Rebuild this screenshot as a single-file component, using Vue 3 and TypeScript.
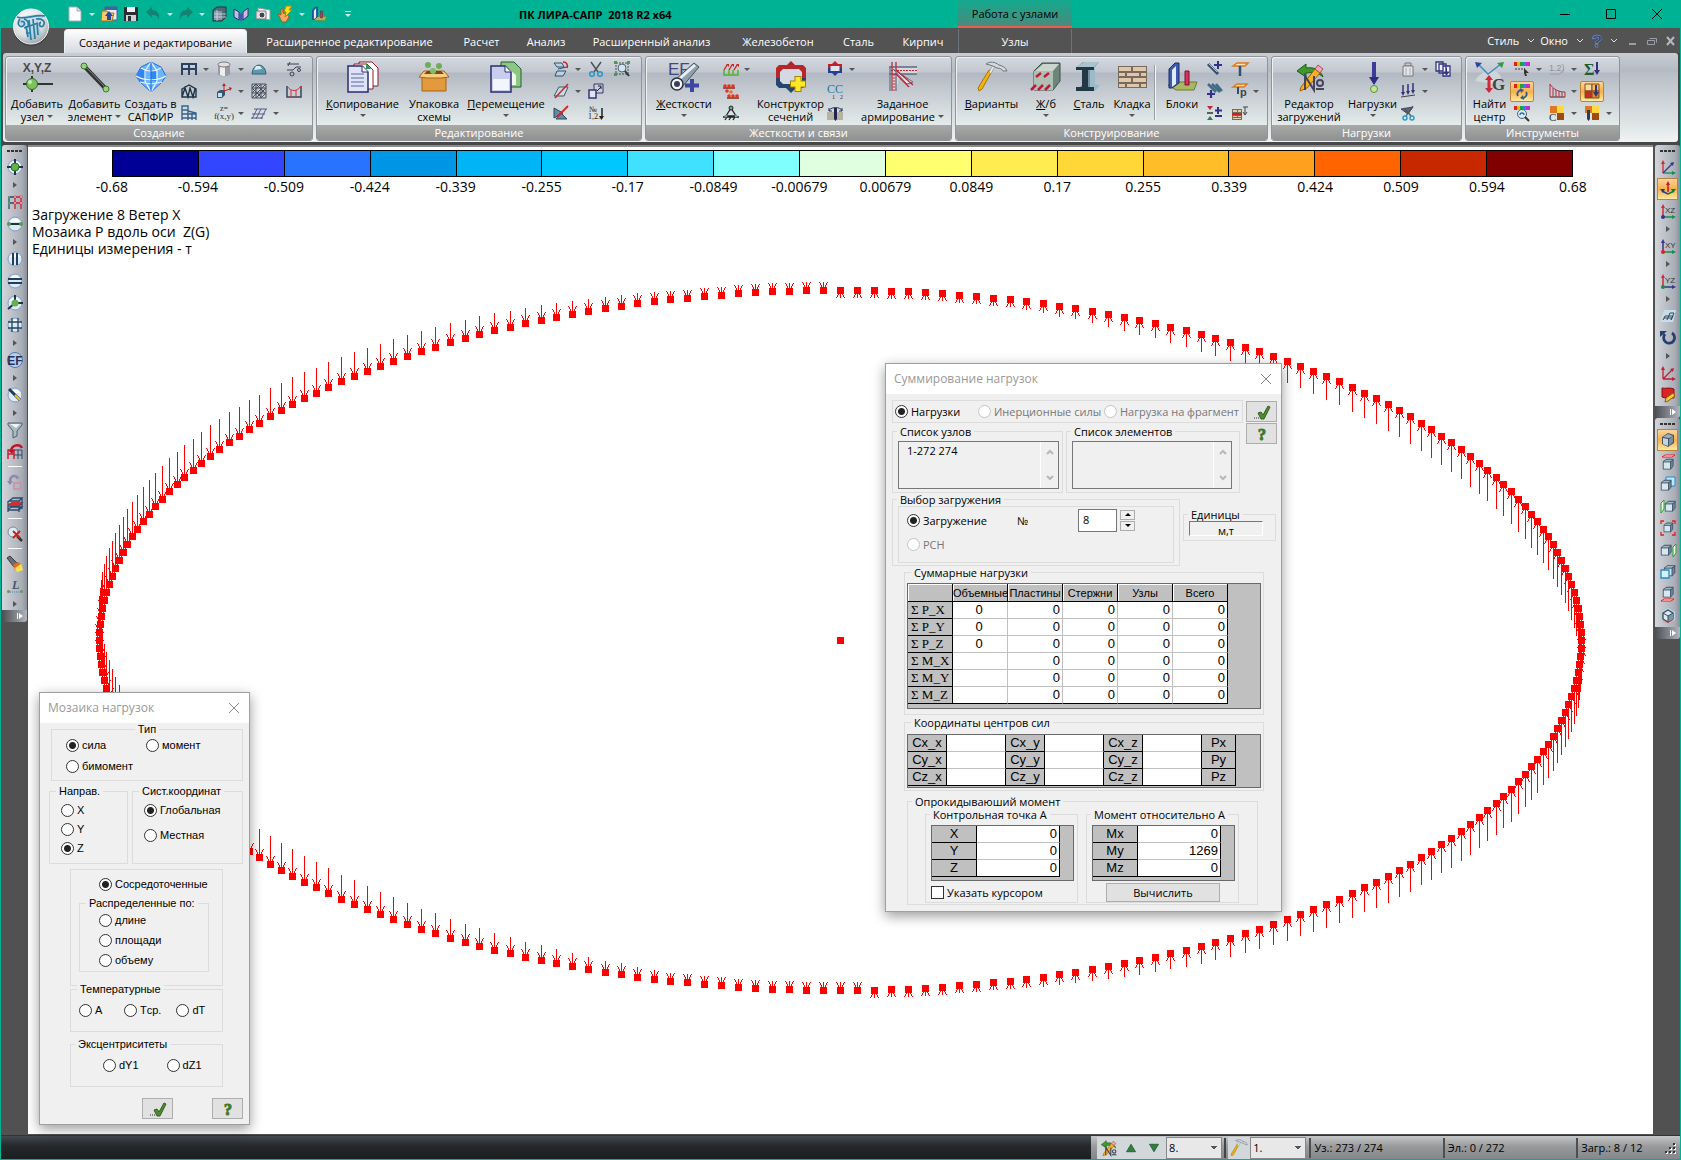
<script setup lang="ts">
import { h, ref } from 'vue'

/* ---------- icons: [view box side, markup] ---------- */
const cube = '<path d="M2 5l4-3h8v8l-3 4H2z" fill="#41566b"/><path d="M3 6h7v7H3z" fill="#d8e6ee"/><path d="M3 5l3-2h7l-3 2z" fill="#9fb2c0"/><path d="M11 6l2-2v6l-2 3z" fill="#6f8698"/>'
const ball = '<circle cx="8" cy="8" r="7" fill="#dcebf7" stroke="#7d9cc0"/><path d="M3 6a5.500 5.500 0 0 1 10 0" fill="#fff"/>'
const spectrum = '<path d="M0 1h3v4H0z" fill="#e02020"/><path d="M3 1h3v4H3z" fill="#f0c000"/><path d="M6 1h3v4H6z" fill="#20a040"/><path d="M9 1h3v4H9z" fill="#3080f0"/><path d="M12 1h4v4h-4z" fill="#c030c0"/>'
const hammer = '<path d="M16 10L6 28l-3 2-1-3L13 9z" fill="#f2b40c" stroke="#a87404"/><path d="M13 11l4-7 2 1-4 8z" fill="#e8e8e8" stroke="#888" stroke-width=".6"/><path d="M10 3c4-3 9-2 13 1 4 1 7 3 8 6l-4 0c-1-2-3-3-6-3-3-2-7-3-11-4z" fill="#d5dade" stroke="#6c757c"/>'
const editNo = '<path d="M4 10l9-7v4c8-1 14 1 17 9-4-4-9-5-17-4v4z" fill="#3f9a2e" stroke="#1e5c16"/><path d="M8 26L22 8l5 4L14 27l-7 3z" fill="#ffb01c" stroke="#9c6204"/><path d="M22 8l3-4 5 4-3 4z" fill="#f3a7b0" stroke="#a05060"/><path d="M12 29V15l9 14V15" fill="none" stroke="#45465c" stroke-width="2"/><circle cx="27" cy="22" r="3" fill="none" stroke="#45465c" stroke-width="2"/><path d="M23 28h8" stroke="#45465c" stroke-width="2"/>'
const axes = (v: string, hz: string, dot: string, t: string) =>
  `<path d="M3 13V4" stroke="${v}" stroke-width="1.500"/><path d="M1 5l2-4 2 4z" fill="${v}"/><path d="M3 14h9" stroke="${hz}" stroke-width="1.500"/><path d="M12 12l4 2-4 2z" fill="${hz}"/><circle cx="3" cy="14" r="2" fill="${dot}"/><text x="5" y="10" font-size="8" font-family="Liberation Sans, sans-serif" fill="#333">${t}</text>`
const quad = '<path d="M1 1h7v7H1z" fill="#e07820"/><path d="M8 1h7v7H8z" fill="#ffd840"/><path d="M8 8h7v7H8z" fill="#a04a10"/>'

const icons: Record<string, [number, string]> = {
  fileNew: [16, '<path d="M2 1h8l4 4v10H2z" fill="#fff" stroke="#aab"/><path d="M10 1v4h4" fill="#dde" stroke="#aab"/>'],
  open: [16, '<path d="M4 1h12v13H4z" fill="#e8ecf6" stroke="#506090"/><path d="M4 1h12v3H4z" fill="#4060b0"/><path d="M1 5h5l1 2h6l-2 8H0z" fill="#f6c96a" stroke="#a8741c"/><path d="M6 14v-4H4l4-5 4 5h-2v4z" fill="#2848a0"/>'],
  save: [16, '<path d="M1 1h14v14H1z" fill="#2a2d33"/><path d="M4 1h8v5H4z" fill="#f2f2f2"/><path d="M3 9h10v6H3z" fill="#cfd3d8"/><path d="M5 10h3v5H5z" fill="#2a2d33"/>'],
  undo: [16, '<path d="M1 6l6-5v3c5 0 8 3 7 10-1-4-3-5-7-5v3z" fill="#148374"/>'],
  redo: [16, '<path d="M15 6L9 1v3C4 4 1 7 2 14c1-4 3-5 7-5v3z" fill="#148374"/>'],
  cubeDark: [16, '<path d="M2 4l4-3h9v10l-4 4H2z" fill="#506878" stroke="#25343f"/><path d="M3 5h8v9H3z" fill="#7f98a8"/><path d="M3 8h12M3 11h12M6 4v11" stroke="#d0dde5" stroke-width=".8"/>'],
  book: [16, '<path d="M1 3l5 3v8l-5-3z" fill="#b8c4e8" stroke="#28306c"/><path d="M10 6l5-4v8l-5 4z" fill="#d8b8d8" stroke="#28306c"/><path d="M6 6l2 2 2-2v8l-2 1-2-1z" fill="#4058b0"/>'],
  camera: [16, '<path d="M3 2l12 2v10L3 12z" fill="#fff" stroke="#999"/><path d="M1 5h10v8H1z" fill="#d8dce0" stroke="#777"/><circle cx="7" cy="9" r="3" fill="#445" stroke="#eee"/>'],
  bolt: [16, '<path d="M1 8l3 1V3h2v4l4 1 2 3-3 5H5z" fill="#f5a860" stroke="#a85c18"/><path d="M9 0h6l-3 4h3l-7 7 1-5H7z" fill="#ffe020" stroke="#c08000"/>'],
  blocks: [32, '<path d="M2 24l8 5h18l3-8H14z" fill="#a8b860" stroke="#6c7a30"/><path d="M3 8l6-6h4v20l-7 5H3z" fill="#3c5cae" stroke="#1c2c70"/><path d="M6 9l4-4v18l-4 3z" fill="#e4ecfa"/><path d="M19 10h4v14h-4z" fill="#d8305a" stroke="#801030"/>'],
  xyz: [32, '<text x="16" y="11" text-anchor="middle" font-size="12" font-weight="bold" font-family="Liberation Sans, sans-serif" fill="#4a4a4a">X,Y,Z</text><path d="M2 23h30" stroke="#333" stroke-width="2"/><path d="M11 15v16" stroke="#333" stroke-width="2"/><circle cx="11" cy="23" r="5.500" fill="#7cc25c" stroke="#2f6c20"/><circle cx="9" cy="21" r="2" fill="#c4eeb0"/>'],
  element: [32, '<path d="M6 6l21 22" stroke="#333" stroke-width="4"/><path d="M6 5l21 22" stroke="#888" stroke-width="1"/><circle cx="5" cy="5" r="3" fill="#9ad080" stroke="#3a7a28"/><circle cx="27" cy="28" r="3" fill="#9ad080" stroke="#3a7a28"/>'],
  sapfir: [32, '<path d="M16 1l10 5 5 9-4 6-11 10L5 21l-4-6 5-9z" fill="#6cb4ff" stroke="#1d6fe0"/><path d="M5 21L1 15l5-9 5 3-1 11zM16 9l5 0 1 11h-6z" fill="#2f86f4"/><path d="M16 1L10 10v10l6 11 6-11V10zM6 7c6 4 14 4 20 0M1 15c8 5 22 5 30 0M5 21c7 2 15 2 22 0" fill="none" stroke="#eaf5ff" stroke-width="1.200"/><path d="M16 1v30" stroke="#1768d8"/>'],
  frame: [16, '<path d="M1 3h14v10M1 2v12M8 2v12M15 2v12M1 8h14" fill="none" stroke="#2a4160" stroke-width="2"/>'],
  truss: [16, '<path d="M1 6l7-4 7 4v8H1zM1 14L4 5l3 9 2-9 3 9 2-8" fill="none" stroke="#1f3448" stroke-width="1.400"/>'],
  tower: [16, '<path d="M1 15V1h6v14M1 5h6M1 9h14M7 6l8 2v7M11 7v8M1 13h14" fill="none" stroke="#35618c" stroke-width="1.400"/>'],
  cylinder: [16, '<path d="M2 3v10c2 3 10 3 12 0V3z" fill="#9a9aa6"/><path d="M4 4v10c2 1 4 1 5 1V5z" fill="#eee"/><ellipse cx="8" cy="3.500" rx="6" ry="2.500" fill="#e4dede" stroke="#777"/>'],
  move3d: [16, '<path d="M1 9l3-2h5v5l-3 3H1z" fill="#36586e"/><path d="M2 10h4v4H2z" fill="#bfe4f4"/><path d="M8 8V2M8 8l6-2" stroke="#c82020"/><path d="M6 3l2-3 2 3zM13 4l3 1-2 3z" fill="#c82020"/>'],
  zfx: [16, '<text x="8" y="6" font-size="8" text-anchor="middle" font-family="Liberation Serif, serif" fill="#333">z=</text><text x="8" y="14" font-size="9" text-anchor="middle" font-family="Liberation Serif, serif" fill="#333">f(x,y)</text>'],
  dome: [16, '<path d="M1 13a7 9 0 0 1 14 0z" fill="#5c98b0" stroke="#39606f"/><path d="M3 9l2-4 4 0 2 3z" fill="#d6eef6"/>'],
  mesh: [16, '<path d="M1 1h14v14H1zM1 5h14M1 10h14M5 1v14M10 1v14M1 5l4-4M1 10l9-9M1 15L15 1M5 15l10-10M10 15l5-5M5 1l10 10M1 5l10 10" fill="none" stroke="#46505c"/>'],
  plate: [16, '<path d="M3 4h13M1 9h13M0 13h12M6 4L1 14M10 4L5 14M15 4l-5 10" fill="none" stroke="#55598c"/>'],
  nodeLines: [16, '<path d="M1 3h12M4 1l-2 4M1 9h6l3-3h5" fill="none" stroke="#3a4250"/><circle cx="13" cy="9" r="1.500" fill="none" stroke="#3a4250"/><circle cx="6" cy="13" r="2" fill="none" stroke="#3a4250"/>'],
  catenary: [16, '<path d="M1 3v11h14V3" fill="none" stroke="#33475c" stroke-width="1.500"/><path d="M1 3c4 6 10 6 14 0M5 7v7M10 7v7" fill="none" stroke="#d03040"/>'],
  copy: [32, '<path d="M12 1h13l6 6v18H12z" fill="#fff" stroke="#8a1f2c"/><path d="M7 3h13l6 6v19H7z" fill="#fff" stroke="#8a1f2c"/><path d="M19 2l5 6h-5z" fill="#3d8f50"/><path d="M1 5h14l6 6v20H1z" fill="#dfe3f8" stroke="#2b2d70" stroke-width="1.500"/><path d="M15 5v6h6" fill="#fff" stroke="#2b2d70"/><path d="M4 13h13M4 17h13M4 21h13M4 25h13" stroke="#5f66a8"/>'],
  pack: [32, '<path d="M4 15h24v15H4z" fill="#e29a3c" stroke="#a86410"/><path d="M1 16l5-6h20l5 6-8 1H9z" fill="#f8cd84" stroke="#a86410"/><path d="M6 13l3-3h14l3 3z" fill="#7c4a10"/><circle cx="10" cy="4" r="3" fill="#6cae5c"/><circle cx="21" cy="5" r="3" fill="#6cae5c"/><circle cx="15" cy="10" r="3" fill="#80be6c"/>'],
  moveDoc: [32, '<path d="M11 1h13l7 7v18H11z" fill="#8cc884" stroke="#245e2c"/><path d="M16 6l10 8v10H16z" fill="#eef8ec"/><path d="M1 5h14l6 6v20H1z" fill="#c8cdee" stroke="#2b2d70" stroke-width="1.500"/><path d="M3 18h16v11H3z" fill="#f3f5fd"/><path d="M15 5v6h6" fill="#fff" stroke="#2b2d70"/>'],
  rotPlanes: [16, '<path d="M1 2h8l2 4H4zM4 10h9l-3 5H2z" fill="#b8d4e2" stroke="#33506a"/><path d="M5 8l9-2" stroke="#33506a"/><path d="M10 1c4 0 5 3 4 6" fill="none" stroke="#d02020" stroke-width="1.500"/>'],
  mirror: [16, '<path d="M1 13L6 4h9l-4 9z" fill="#c6dbe6" stroke="#3c5a6c"/><path d="M2 15L15 1" stroke="#c82828" stroke-width="1.500"/>'],
  split: [16, '<path d="M1 3l9 5-9 5zM3 14h11l-6-6z" fill="#5f8ba8" stroke="#2c4a5e"/><path d="M4 12L15 1" stroke="#d02828" stroke-width="1.800"/>'],
  scissors: [16, '<path d="M3 1l7 10M13 1L6 11" stroke="#4a5560" stroke-width="1.500"/><circle cx="4" cy="13" r="2.300" fill="none" stroke="#2898c8" stroke-width="1.500"/><circle cx="12" cy="13" r="2.300" fill="none" stroke="#2898c8" stroke-width="1.500"/>'],
  scale: [16, '<path d="M6 1h9v9H6z" fill="#c9cde0" stroke="#34386c"/><path d="M1 7h7v8H1z" fill="#dfe3f4" stroke="#34386c" stroke-width="1.500"/><path d="M9 8l4-4M10 3h3v3" fill="none" stroke="#222"/>'],
  renumber: [16, '<text x="1" y="7" font-size="8" font-family="Liberation Serif, serif" fill="#222">№</text><text x="0" y="14" font-size="8" font-family="Liberation Serif, serif" fill="#222">1,2..</text><path d="M14 3v9" stroke="#222" stroke-width="1.500"/><path d="M11 11h5l-2.500 4z" fill="#222"/>'],
  zoomSel: [16, '<path d="M2 2h12v11H2z" fill="none" stroke="#3d5a48" stroke-dasharray="2 1"/><path d="M0 0h3v3H0zM13 0h3v3h-3zM0 12h3v3H0z" fill="#4c9a50"/><circle cx="8" cy="7" r="4" fill="#cfe6f2" stroke="#51636e"/><path d="M11 10l4 5" stroke="#333" stroke-width="2"/>'],
  stiff: [32, '<text x="0" y="14" font-size="17" font-family="Liberation Sans, sans-serif" fill="#44477c">EF</text><path d="M7 19L26 2l5 4-17 20z" fill="#8ea0ac" stroke="#46525c"/><path d="M10 19L27 4" stroke="#e8eff3" stroke-width="3"/><circle cx="9" cy="23" r="6" fill="#f4f6f8" stroke="#2c3240" stroke-width="1.500"/><circle cx="9" cy="23" r="3" fill="#3a4058"/><path d="M24 18v13M17 24.500h14" stroke="#3c48a0" stroke-width="4"/>'],
  loadsUp: [16, '<path d="M1 9l3-5M6 9l3-5M11 9l3-5" stroke="#d02020" stroke-width="1.300"/><path d="M3 3h3v3zM8 3h3v3zM13 3h3v3z" fill="#d02020"/><path d="M1 9v5h14V9M6 9v5M10 9v5" fill="none" stroke="#58b030" stroke-width="1.500"/>'],
  springs: [16, '<path d="M0 5h12M4 15h12" stroke="#803018" stroke-width="1.500"/><circle cx="2" cy="3" r="1.800" fill="#e83020"/><circle cx="6" cy="3" r="1.800" fill="#e83020"/><circle cx="10" cy="3" r="1.800" fill="#e83020"/><circle cx="4" cy="8" r="1.800" fill="#e83020"/><circle cx="8" cy="9" r="1.800" fill="#f07030"/><circle cx="6" cy="13" r="1.800" fill="#e83020"/><circle cx="10" cy="13" r="1.800" fill="#e83020"/><circle cx="14" cy="13" r="1.800" fill="#e83020"/>'],
  support: [16, '<path d="M8 3L3 11h10zM0 12h16M2 15l2-3M6 15l2-3M10 15l2-3" fill="none" stroke="#222" stroke-width="1.300"/><circle cx="8" cy="3" r="2" fill="#68a8a0" stroke="#222"/><circle cx="3" cy="11" r="1.500" fill="#68a8a0"/><circle cx="13" cy="11" r="1.500" fill="#68a8a0"/>'],
  section: [32, '<path d="M16 0l5 5H11z" fill="#b02028"/><path d="M4 4h24l3 3v11H1V7z" fill="#b8262c"/><path d="M1 17h30v7l-3 3H4l-3-3z" fill="#27456e"/><path d="M5 11l3-3h16l3 3v9l-3 3H8l-3-3z" fill="#d3dae4"/><path d="M11 27h10l-5 5z" fill="#27456e"/><path d="M23 15v16M15 23h16" stroke="#a88000" stroke-width="7"/><path d="M23 16v14M16 23h14" stroke="#ffe828" stroke-width="5"/>'],
  sectionSm: [16, '<path d="M1 3h14v5H1z" fill="#c02028"/><path d="M1 7h14v5H1z" fill="#283c90"/><path d="M3.500 5h9v5h-9z" fill="#dfe5ec"/><path d="M8 0l3 3H5z" fill="#c02028"/><path d="M8 15l-3-3h6z" fill="#283c90"/>'],
  c1c2: [16, '<text x="0" y="10" font-size="12" font-family="Liberation Serif, serif" fill="#2478a4">C</text><text x="8" y="10" font-size="12" font-family="Liberation Serif, serif" fill="#2478a4">C</text><text x="5" y="16" font-size="6" font-family="Liberation Serif, serif" fill="#333">1</text><text x="13" y="16" font-size="6" font-family="Liberation Serif, serif" fill="#333">2</text>'],
  pile: [16, '<path d="M0 7h16v8H0z" fill="#b5b4a4"/><path d="M7 3h3v11l-1.500 2L7 14z" fill="#20264e"/><path d="M2 6c0-4 12-5 13 0M2 3v3h3M15 3v3h-3" fill="none" stroke="#28305c"/>'],
  rebar: [32, '<path d="M2 6h28v7H13L9 30H2z" fill="#d6dade"/><path d="M2 6h28M2 13h28M3 30V6M9 30V13" fill="none" stroke="#5d6c7c" stroke-width="1.300"/><path d="M5 1v29M9 1v10" stroke="#c02838" stroke-width="1.300"/><path d="M7 30V12M4 9.500h26" stroke="#c02838" stroke-dasharray="2 1"/><path d="M6 8l20 13-6 2z" fill="#e6eaee" stroke="#5d6c7c"/><path d="M9 9l17 15M8 12l14 14" stroke="#c02838" stroke-width="1.400"/>'],
  hammer: [32, hammer],
  rc: [32, '<path d="M4 10l8-8h18v18l-7 9H4z" fill="#6c877a" stroke="#3c5046"/><path d="M4 10h19v19H4z" fill="#aec0b4"/><path d="M5 10l8-7h16l-6 7z" fill="#c9d6cd"/><path d="M6 16l5-4M14 16l5-4M1 29l5-5M8 29l5-5M15 29l5-5" stroke="#c01838" stroke-width="2.500"/>'],
  steel: [32, '<path d="M4 6l6-5h16l-4 5-5 3v14l5 7H3l7-7V9H3z" fill="#7592a2"/><path d="M17 9l5-4v18l5 1-5 6h-5z" fill="#9dbac8"/><path d="M3 6h18v3h-6v17h6v4H3v-4h6V9H3z" fill="#223844"/><path d="M4 6l7-5h15l-5 5z" fill="#a9c3cf"/>'],
  masonry: [32, '<path d="M2 5h29v22H2z" fill="#786a5c"/><path d="M3 6h12v4H3zM17 6h13v4H17zM3 12h6v3H3zM11 12h12v3H11zM25 12h5v3h-5zM3 17h12v4H3zM17 17h13v4H17zM3 23h6v3H3zM11 23h12v3H11zM25 23h5v3h-5z" fill="#dfc8aa"/>'],
  beamPlus: [16, '<path d="M2 3l10 10" stroke="#34506a" stroke-width="3"/><path d="M2 2l9 9" stroke="#9cc4d8"/><path d="M12 0v8M8 4h8" stroke="#34308c" stroke-width="2"/>'],
  beamsPlus: [16, '<path d="M2 1l8 8M6 1l8 8M10 1l6 7" stroke="#3f6c88" stroke-width="2.500"/><path d="M5 7v8M1 11h8" stroke="#34308c" stroke-width="2.200"/>'],
  plusMinus: [16, '<path d="M1 1h6L4 5z" fill="#c02838"/><path d="M1 15h6l-3-4z" fill="#2f8048"/><path d="M1 8h6" stroke="#333" stroke-width="1.500"/><path d="M12 2v7M9 5.500h7M9 11h7" stroke="#34308c" stroke-width="2"/>'],
  tBeam: [16, '<path d="M1 5l4-3h11l-3 3z" fill="#ffe0b0" stroke="#e07818" stroke-width="1.500"/><path d="M8 5v10" stroke="#2f5070" stroke-width="2.500"/>'],
  tBeamP: [16, '<path d="M1 4l4-3h10l-3 3z" fill="#ffe0b0" stroke="#e07818" stroke-width="1.500"/><path d="M6 4v7" stroke="#2f5070" stroke-width="2"/><text x="8" y="13" font-size="11" font-weight="bold" font-family="Liberation Sans, sans-serif" fill="#444">p</text>'],
  brickLoad: [16, '<path d="M0 4h10v11H0z" fill="#776a5c"/><path d="M1 5h4v2H1zM6 5h3v2H6zM1 11h4v1H1zM6 11h3v1H6zM1 13h8v1H1z" fill="#e0cdb0"/><path d="M0 8h10v2H0z" fill="#d02020"/><path d="M11 2h5M13 2v7M11 7l2 3 2-3" fill="none" stroke="#444"/>'],
  editNo: [32, editNo],
  loadDown: [32, '<path d="M15 1h4v18h-4z" fill="#3c3c96"/><path d="M12 16h10l-5 8z" fill="#2c2c80"/><circle cx="17" cy="28" r="3.500" fill="#c2e49c" stroke="#5c9430"/>'],
  weight: [16, '<path d="M5 2h6v3H5z" fill="#c8ccd0" stroke="#777"/><path d="M3 5h10v10H3z" fill="#e2e5e8" stroke="#777"/><path d="M6 7v7M10 7v7" stroke="#aaa"/>'],
  distLoad: [16, '<path d="M3 2v9M8 1v9M13 0v9" stroke="#33337c" stroke-width="1.500"/><path d="M1 9h4l-2 4zM6 8h4l-2 4zM11 7h4l-2 4z" fill="#33337c"/><path d="M1 14l14-2" stroke="#444"/>'],
  cutLoad: [16, '<path d="M1 4l12-2-5 7z" fill="#667" stroke="#446"/><path d="M4 3l7 8M13 1L6 11" stroke="#4a5560" stroke-width="1.300"/><circle cx="5" cy="13" r="2" fill="none" stroke="#2898c8" stroke-width="1.400"/><circle cx="12" cy="13" r="2" fill="none" stroke="#2898c8" stroke-width="1.400"/>'],
  copyLoad: [16, '<path d="M1 1h7v9H1zM4 3h7v9H4zM8 5h7v10H8z" fill="#eef" stroke="#33357c" stroke-width="1.300"/><path d="M11.500 7v5M9 11h5l-2.500 3z" fill="#33357c" stroke="#33357c"/>'],
  findC: [32, '<path d="M1 20C8 8 22 6 27 16c-2 6-8 9-14 6z" fill="#cfd6d8"/><path d="M5 4l9 9L27 3" fill="none" stroke="#3c8fc0" stroke-width="1.500"/><path d="M1 1l7 1-5 5z" fill="#2848a0"/><path d="M30 1l-7 1 5 5z" fill="#2f9a48"/><path d="M15 17v12" stroke="#d02838" stroke-width="3"/><path d="M11 19l4-5 4 5zM11 27h8l-4 5z" fill="#d02838"/><text x="18" y="29" font-size="17" font-weight="bold" font-family="Liberation Serif, serif" fill="#3f4448">G</text>'],
  specSel: [16, spectrum + '<path d="M1 8h10" stroke="#333" stroke-dasharray="2 1"/><path d="M10 7l5 5-3 0 1 3-2 0-1-3z" fill="#333"/>'],
  specCycle: [16, spectrum + '<path d="M4 13a4.500 4 0 0 1 3-6M12 9a4.500 4 0 0 1-3 6" fill="none" stroke="#355a80" stroke-width="1.800"/><path d="M6 5l4 2-3 3zM10 17l-4-2 3-3z" fill="#355a80"/>'],
  specZoom: [16, spectrum + '<circle cx="8" cy="9" r="4.500" fill="#d6ebf5" stroke="#50616c"/><path d="M11 12l4 4" stroke="#333" stroke-width="2"/><path d="M6 10a2 2 0 1 1 4 0" fill="none" stroke="#2f6c9c" stroke-width="1.300"/>'],
  num: [16, '<text x="0" y="10" font-size="9" font-family="Liberation Sans, sans-serif" fill="#8c929a">1.2)</text><path d="M1 13h10l4-5" fill="none" stroke="#9aa0a8"/>'],
  hist: [16, '<path d="M1 1v13h15V9C9 9 4 6 1 1zM4 5v9M7 7v7M10 8v6M13 9v5" fill="none" stroke="#b03040"/><path d="M1 14h15" stroke="#666"/>'],
  quadC: [16, quad + '<text x="0" y="16" font-size="11" font-family="Liberation Serif, serif" fill="#333">C</text>'],
  sigma: [16, '<text x="0" y="14" font-size="16" font-weight="bold" font-family="Liberation Serif, serif" fill="#1f5c38">Σ</text><path d="M13 1v9" stroke="#33337c" stroke-width="2"/><path d="M10 9h6l-3 5z" fill="#33337c"/>'],
  quadDown: [16, '<path d="M1 1h7v7H1z" fill="#fbd9a0" stroke="#7c5020"/><path d="M8 1h7v7H8z" fill="#ffb85c" stroke="#7c5020"/><path d="M1 8h7v7H1z" fill="#c03020" stroke="#7c5020"/><path d="M8 8h7v7H8z" fill="#e88820" stroke="#7c5020"/><path d="M12 2v8" stroke="#33337c" stroke-width="2"/><path d="M9 9h6l-3 5z" fill="#33337c"/>'],
  quadPile: [16, quad + '<path d="M3 5h3v9l-1.500 2L3 14z" fill="#2c3d58"/>'],
  help: [16, '<text x="8" y="14" text-anchor="middle" font-size="17" font-weight="bold" font-family="Liberation Sans, sans-serif" fill="#24407c" stroke="#8fa4cc" stroke-width=".5">?</text>'],
  bNode: [16, ball + '<path d="M8 0v16M0 8h16" stroke="#234" stroke-width="2"/><circle cx="8" cy="8" r="4" fill="#63b04e" stroke="#2c6c20"/>'],
  selFrame: [16, '<path d="M2 15V3h6M2 9h6" fill="none" stroke="#234e70" stroke-width="1.300"/><path d="M8 15V3h6v12M8 9h6" fill="none" stroke="#d02030" stroke-width="1.300"/><path d="M1 2h2v2H1zM1 8h2v2H1z" fill="#56a048"/><path d="M7 2h2v2H7zM13 2h2v2h-2zM7 8h2v2H7zM13 8h2v2h-2z" fill="#fff" stroke="#d02030" stroke-width=".6"/>'],
  bElem: [16, ball + '<path d="M1 8h14" stroke="#234" stroke-width="2"/><circle cx="2" cy="8" r="2" fill="#56a048"/><circle cx="14" cy="8" r="2" fill="#56a048"/>'],
  bVert: [16, ball + '<path d="M6 2v12M10 2v12" stroke="#1e3f60" stroke-width="2"/>'],
  bHor: [16, ball + '<path d="M1 6h14M1 10h14" stroke="#1e3f60" stroke-width="2"/>'],
  bTri: [16, ball + '<path d="M8 0v8l-7 6M8 8h8" fill="none" stroke="#234" stroke-width="2"/><circle cx="8" cy="8" r="3.500" fill="#63b04e"/>'],
  bGrid: [16, ball + '<path d="M5 1v14M11 1v14M1 5h14M1 11h14" stroke="#1e4464" stroke-width="1.300"/>'],
  bEF: [16, '<circle cx="8" cy="8" r="7.500" fill="#b8d0e8" stroke="#5478a8"/><text x="8" y="12.500" text-anchor="middle" font-size="12" font-weight="bold" font-family="Liberation Sans, sans-serif" fill="#24305c">EF</text>'],
  bPen: [16, ball + '<path d="M2 2l11 11" stroke="#223a60" stroke-width="3"/><path d="M8 8l5 5" stroke="#f0c820" stroke-width="2"/>'],
  funnel: [16, '<path d="M1 1h14v2l-5 6v5l-4 2V9L1 3z" fill="#a8bcc4" stroke="#4d626c"/><path d="M3 2h10l-4 4z" fill="#eef4f6"/>'],
  undoFrame: [16, '<path d="M1 15V6h6v9M1 10h6" fill="none" stroke="#d02030" stroke-width="1.500"/><path d="M7 6h8v9M7 11h8M11 6v9" fill="none" stroke="#2c4c6c"/><path d="M4 8c0-8 9-8 11-4" fill="none" stroke="#c01828" stroke-width="2.500"/><path d="M1 6h7l-3 4z" fill="#c01828"/>'],
  undoPale: [16, '<path d="M3 8c0-8 7-7 8-3" fill="none" stroke="#8d88b0" stroke-width="2.500"/><path d="M0 7h6l-3 4z" fill="#8d88b0"/><path d="M7 9h7v6H7z" fill="none" stroke="#d08ca8" stroke-width="1.500"/><path d="M11 5l4-4M12 5l3 3" stroke="#a0a8a8"/>'],
  floors: [16, '<path d="M2 5l4-3h9l-3 3zM1 9l4-2h10l-3 3H1zM1 13l4-2h10l-3 3H1zM1 5v11M12 5v11M15 2v11" fill="none" stroke="#2a4c70" stroke-width="1.300"/><path d="M1 9l4-3h10l-3 4H1z" fill="#d03030"/>'],
  zoomOff: [16, '<circle cx="6" cy="6" r="5" fill="#dcecf4" stroke="#7a8c98"/><path d="M10 10l5 5" stroke="#333" stroke-width="2.500"/><path d="M6 5l7 7M13 5l-7 7" stroke="#e01818" stroke-width="2"/>'],
  torch: [16, '<path d="M0 2l3-2 8 8-4 3z" fill="#6a6e72" stroke="#3a3c40"/><path d="M6 9l5-3 3 2-6 6z" fill="#e06c20"/><path d="M8 12l6-4 2 6-6 2z" fill="#ffe24a"/>'],
  dimL: [16, '<text x="5" y="11" font-size="12" font-style="italic" font-weight="bold" font-family="Liberation Serif, serif" fill="#44586c">L</text><path d="M3 14h10" stroke="#5878a8" stroke-dasharray="1 1"/><circle cx="1.500" cy="13.500" r="1.500" fill="#58a050"/><circle cx="14.500" cy="13.500" r="1.500" fill="#58a050"/>'],
  ax3: [16, '<path d="M3 14V4" stroke="#d02838" stroke-width="1.300"/><path d="M3 14h9" stroke="#109048" stroke-width="1.300"/><path d="M3 14l9-9" stroke="#33358c" stroke-width="1.300"/><path d="M1 5l2-4 2 4z" fill="#d02838"/><path d="M12 12l4 2-4 2z" fill="#109048"/><path d="M14 3l-1 4-3-3z" fill="#33358c"/>'],
  axIso: [16, '<path d="M8 11V3" stroke="#c01828" stroke-width="1.500"/><path d="M6 4l2-4 2 4z" fill="#c01828"/><path d="M8 13l-6-3" stroke="#33358c" stroke-width="1.500"/><path d="M0 8l5 0-2 4z" fill="#33358c"/><path d="M8 13l6-3" stroke="#108040" stroke-width="1.500"/><path d="M16 8l-5 0 2 4z" fill="#108040"/>'],
  axXZ: [16, axes('#d02838', '#109048', '#33358c', 'XZ')],
  axXY: [16, axes('#33358c', '#109048', '#e02020', 'XY')],
  axYZ: [16, axes('#d02838', '#33358c', '#109048', 'YZ')],
  planeView: [16, '<path d="M4 2h12l-3 12H0z" fill="#c8dcea"/><path d="M3 12l2-4h8l-2 4M7 12l3-7h4l-3 7M4 10h8" fill="none" stroke="#33485c"/>'],
  rotate: [16, '<path d="M5 4a5.500 5.500 0 1 0 7-1" fill="none" stroke="#27406e" stroke-width="2.800"/><path d="M0 7V1h7z" fill="#27406e"/>'],
  axRed: [16, '<path d="M3 14V4M3 14h9M3 14l9-9" stroke="#c02030" stroke-width="1.300"/><path d="M1 5l2-4 2 4zM12 12l4 2-4 2zM14 3l-1 4-3-3z" fill="#c02030"/>'],
  flagPen: [16, '<path d="M2 1c4 1 7-1 12 1v9c-4-1-8 1-12-1z" fill="#d82424" stroke="#8c1010"/><path d="M5 15l1-4 7-5 2 3-7 5z" fill="#ffc83c" stroke="#8c5c08"/>'],
  cIso: [16, '<path d="M2 5l6-4 6 2v8l-6 4-6-3z" fill="#41566b"/><path d="M3 6l5 1v7l-5-2z" fill="#c4d3dc"/><path d="M9 7l4-3v6l-4 4z" fill="#7890a0"/><path d="M3 5l5-3 5 2-4 2z" fill="#9cb0bd"/>'],
  cTop: [16, '<path d="M2 3l3-2h10l-3 2z" fill="#fff" stroke="#e02020"/><g transform="translate(1 3) scale(.9)">' + cube + '</g>'],
  cBack: [16, '<path d="M6 1h9v9H6z" fill="#bfe6fa" stroke="#1c8cd0"/><g transform="translate(-1 2) scale(.9)">' + cube + '</g>'],
  cLeft: [16, '<path d="M1 5l3-3v9l-3 4z" fill="#e8fae0" stroke="#28a030"/><g transform="translate(3 1) scale(.9)">' + cube + '</g>'],
  cSel: [16, '<g transform="translate(2 1) scale(.8)">' + cube + '</g><path d="M1 4V1h3M12 1h3v3M1 12v3h3M12 15h3v-3" fill="none" stroke="#e02020" stroke-width="1.300"/>'],
  cRight: [16, '<g transform="translate(-1 1) scale(.9)">' + cube + '</g><path d="M13 5l3-3v9l-3 4z" fill="#e8fae0" stroke="#28a030"/>'],
  cFront: [16, '<g transform="translate(2 -1) scale(.95)">' + cube + '</g><path d="M1 6h8v8H1z" fill="#d8f0fc" stroke="#1c8cd0" stroke-width="1.300"/>'],
  cBottom: [16, '<path d="M1 15l3-2h10l-3 2z" fill="#fff" stroke="#e02020"/><g transform="translate(1 -1) scale(.9)">' + cube + '</g>'],
  cAll: [16, '<path d="M8 0l7 4v8l-7 4-7-4V4z" fill="#b0d8e8"/><path d="M1 4l7 4-7 4z" fill="#a8d8a0"/><path d="M2 13l6-4 6 4-6 3z" fill="#e89898"/><path d="M8 2l5 3v6l-5 3-5-3V5z" fill="#dfe9ef" stroke="#354a5c" stroke-width="1.300"/><path d="M8 8l5-3v6l-5 3z" fill="#7f96a6"/><path d="M3 5l5 3 5-3M8 8v6" fill="none" stroke="#354a5c"/>'],
  up: [16, '<path d="M8 3l6 10H2z" fill="#2f8040" stroke="#1c5028"/>'],
  down: [16, '<path d="M8 13L2 3h12z" fill="#2f8040" stroke="#1c5028"/>'],
  check: [16, '<path d="M4 9l3-1 2 3 5-9 2 1-6 12H7z" fill="#4f8a38" stroke="#33601f"/><path d="M0 14h5" stroke="#333" stroke-dasharray="1 1"/>'],
  quest: [16, '<text x="8" y="14" text-anchor="middle" font-size="16" font-weight="bold" font-family="Liberation Serif, serif" fill="#3f7a2a" stroke="#3f7a2a">?</text>'],
}

const Ico = (p: { n: string; s: number }) => {
  const [box, markup] = icons[p.n]
  return h('svg', { class: 'ico', viewBox: `0 0 ${box} ${box}`, width: p.s, height: p.s, 'aria-hidden': 'true', innerHTML: markup })
}

/* ---------- ribbon ---------- */
interface Small { icon: string; arrow?: boolean; on?: boolean }
interface Item { w: number; icon?: string; key?: string; text?: string; text2?: string; below?: boolean; inline?: boolean; rows?: (Small | null)[]; sep?: boolean }
interface Group { title: string; w: number; items: Item[] }
const s = (icon: string, arrow = false, on = false): Small => ({ icon, arrow, on })

const groups: Group[] = [
  { title: 'Создание', w: 308, items: [
    { w: 62, icon: 'xyz', text: 'Добавить', text2: 'узел', inline: true },
    { w: 53, icon: 'element', text: 'Добавить', text2: 'элемент', inline: true },
    { w: 59, icon: 'sapfir', text: 'Создать в', text2: 'САПФИР' },
    { w: 35, rows: [s('frame', true), s('truss'), s('tower')] },
    { w: 35, rows: [s('cylinder', true), s('move3d', true), s('zfx', true)] },
    { w: 35, rows: [s('dome'), s('mesh', true), s('plate', true)] },
    { w: 26, rows: [s('nodeLines'), s('catenary')] },
  ] },
  { title: 'Редактирование', w: 326, items: [
    { w: 91, icon: 'copy', key: 'К', text: 'опирование', below: true },
    { w: 52, icon: 'pack', text: 'Упаковка', text2: 'схемы' },
    { w: 92, icon: 'moveDoc', key: 'П', text: 'еремещение', below: true },
    { w: 35, rows: [s('rotPlanes', true), s('mirror', true), s('split')] },
    { w: 26, rows: [s('scissors'), s('scale'), s('renumber')] },
    { w: 26, rows: [s('zoomSel')] },
  ] },
  { title: 'Жесткости и связи', w: 307, items: [
    { w: 76, icon: 'stiff', key: 'Ж', text: 'есткости', below: true },
    { w: 33, rows: [s('loadsUp', true), s('springs'), s('support')] },
    { w: 71, icon: 'section', text: 'Конструктор', text2: 'сечений' },
    { w: 35, rows: [s('sectionSm', true), s('c1c2'), s('pile')] },
    { w: 83, icon: 'rebar', text: 'Заданное', text2: 'армирование', inline: true },
  ] },
  { title: 'Конструирование', w: 313, items: [
    { w: 71, icon: 'hammer', key: 'В', text: 'арианты' },
    { w: 38, icon: 'rc', key: 'Ж', text: '/б', below: true },
    { w: 48, icon: 'steel', key: 'С', text: 'таль' },
    { w: 38, icon: 'masonry', text: 'Кладка', below: true },
    { w: 8, sep: true },
    { w: 46, icon: 'blocks', text: 'Блоки' },
    { w: 26, rows: [s('beamPlus'), s('beamsPlus'), s('plusMinus')] },
    { w: 33, rows: [s('tBeam'), s('tBeamP', true), s('brickLoad')] },
  ] },
  { title: 'Нагрузки', w: 191, items: [
    { w: 74, icon: 'editNo', text: 'Редактор', text2: 'загружений' },
    { w: 53, icon: 'loadDown', text: 'Нагрузки', below: true },
    { w: 35, rows: [s('weight', true), s('distLoad', true), s('cutLoad')] },
    { w: 26, rows: [s('copyLoad')] },
  ] },
  { title: 'Инструменты', w: 155, items: [
    { w: 47, icon: 'findC', text: 'Найти', text2: 'центр' },
    { w: 35, rows: [s('specSel', true), s('specCycle', false, true), s('specZoom')] },
    { w: 35, rows: [s('num', true), s('hist', true), s('quadC', true)] },
    { w: 35, rows: [s('sigma'), s('quadDown', false, true), s('quadPile', true)] },
  ] },
]

const tabs = [
  { t: 'Расширенное редактирование', w: 195 }, { t: 'Расчет', w: 69 }, { t: 'Анализ', w: 60 },
  { t: 'Расширенный анализ', w: 151 }, { t: 'Железобетон', w: 102 }, { t: 'Сталь', w: 59 }, { t: 'Кирпич', w: 70 },
]
const quick = ['fileNew', '>', 'open', 'save', 'undo', '>', 'redo', '>', 'cubeDark', 'book', 'camera', 'bolt', '>', 'blocks']

/* ---------- side tool bars: '>' marks a fly-out, '-' a separator, '*' a pressed tool ---------- */
const leftTools = ['bNode', '>', 'selFrame', 'bElem', '>', 'bVert', 'bHor', 'bTri', 'bGrid', '>', 'bEF', '>', 'bPen', '>', 'funnel', 'undoFrame', '-', 'undoPale', 'floors', '-', 'zoomOff', '-', 'torch', 'dimL', '>']
const rightTools = [
  ['ax3', '*axIso', 'axXZ', '>', 'axXY', '>', 'axYZ', '>', 'planeView', 'rotate', '>', 'axRed', 'flagPen'],
  ['*cIso', 'cTop', 'cBack', 'cLeft', 'cSel', 'cRight', 'cFront', 'cBottom', 'cAll'],
]

/* ---------- colour scale ---------- */
const scale = ['#000096', '#3246ff', '#2873ff', '#0096e6', '#00b4f5', '#00c8ff', '#40e0ff', '#80ffff', '#e0ffe0', '#ffff70', '#ffec50', '#ffd838', '#ffbe28', '#ffa01e', '#ff6400', '#c82800', '#800000']
const marks = ['-0.68', '-0.594', '-0.509', '-0.424', '-0.339', '-0.255', '-0.17', '-0.0849', '-0.00679', '0.00679', '0.0849', '0.17', '0.255', '0.339', '0.424', '0.509', '0.594', '0.68']

/* ---------- ring of loaded nodes ---------- */
const COUNT = 272
let nodes = ''
let arrows = ''
for (let i = 0; i < COUNT; i++) {
  const a = (i * 2 * Math.PI) / COUNT
  const x = Math.round(840 + 741 * Math.sin(a))
  const y = Math.round(640 - 350 * Math.cos(a))
  nodes += `M${x - 3} ${y - 3}h7v7h-7z`
  const dir = i < 135 ? 1 : -1
  const len = Math.max(8, Math.round(36 * Math.abs(Math.sin(a))))
  const cx = x + 0.5
  arrows += `M${cx} ${y}v${dir * len}M${cx} ${y}l-4 ${dir * 8}M${cx} ${y}l4 ${dir * 8}`
}
nodes += 'M837 637h7v7h-7z'

/* ---------- dialogs ---------- */
const loadKind = ref('force')
const direction = ref('Z')
const system = ref('global')
const spread = ref('point')
const source = ref('loads')
const pick = ref('case')
const caseNo = ref('8')
const nodeList = ref('1-272 274')
const atCursor = ref(false)

const sumCols = ['Объемные', 'Пластины', 'Стержни', 'Узлы', 'Всего']
const sumRows = ['P_X', 'P_Y', 'P_Z', 'M_X', 'M_Y', 'M_Z']
const centres = ['x', 'y', 'z']
const moments = [['Mx', '0'], ['My', '1269'], ['Mz', '0']]
</script>

<template>
  <div class="app">
    <header class="title">
      <nav class="quick" aria-label="Быстрый доступ">
        <template v-for="(q, i) in quick" :key="i">
          <button v-if="q === '>'" class="qa" aria-label="Ещё"><i class="tri"></i></button>
          <button v-else class="qb" :class="{ narrow: q === 'redo' }" :aria-label="q"><Ico :n="q" :s="16" /></button>
        </template>
        <button class="custom" aria-label="Настройка"><i class="bar"></i><i class="tri"></i></button>
      </nav>
      <h1>ПК ЛИРА-САПР&nbsp; 2018 R2 x64</h1>
      <div class="context">Работа с узлами</div>
      <div class="winbtns">
        <button aria-label="Свернуть"><svg width="12" height="12"><path d="M1 6.500h10" stroke="#000" /></svg></button>
        <button aria-label="Развернуть"><svg width="12" height="12"><path d="M1.500 1.500h9v9h-9z" fill="none" stroke="#000" /></svg></button>
        <button aria-label="Закрыть"><svg width="12" height="12"><path d="M1 1l10 10M11 1L1 11" stroke="#000" /></svg></button>
      </div>
    </header>

    <button class="orb" aria-label="Меню">
      <svg viewBox="0 0 38 38" width="38" height="38">
        <defs><radialGradient id="orb" cx=".4" cy=".3" r=".8"><stop offset="0" stop-color="#fff" /><stop offset=".6" stop-color="#dcdfe0" /><stop offset="1" stop-color="#8a9094" /></radialGradient></defs>
        <circle cx="19" cy="20" r="18" fill="#33383a" opacity=".6" /><circle cx="19" cy="18.500" r="17.500" fill="url(#orb)" stroke="#f4f6f6" />
        <path d="M6 10c8-3 18-5 27-2l-6 5 2 14-9 6-5-2-3-14c-4 2-7-3-6-7z" fill="#6cb4d4" opacity=".35" />
        <g fill="none" stroke="#2c7da4" stroke-width="1.700"><path d="M5 9c7 3 18-3 28-1M8 11c-4 5 0 9 3 7s1-6-2-4M12 11c4 1 5 4 4 7M24 11c7-1 10 3 7 7-3 2-5-2-2-4" /><path d="M14 18l2 11M17 12l2 20M21 11l2 20M25 15l1 12M12 20l14-5M14 25h4" /></g>
      </svg>
    </button>

    <nav class="tabs">
      <button class="tab active">Создание и редактирование</button>
      <button v-for="t in tabs" :key="t.t" class="tab" :style="{ width: t.w + 'px' }">{{ t.t }}</button>
      <button class="tab ctx">Узлы</button>
      <div class="right">
        <button>Стиль</button><svg class="chev" width="8" height="6"><path d="M1 1l3 3 3-3" /></svg>
        <button>Окно</button><svg class="chev" width="8" height="6"><path d="M1 1l3 3 3-3" /></svg>
        <button class="hlp" aria-label="Справка"><Ico n="help" :s="16" /></button><svg class="chev" width="8" height="6"><path d="M1 1l3 3 3-3" /></svg>
        <button class="mdi" aria-label="Свернуть окно"><svg width="10" height="10"><path d="M1 8h7" stroke="#9a9ea6" stroke-width="2" /></svg></button>
        <button class="mdi" aria-label="Восстановить окно"><svg width="10" height="10"><path d="M2.500 2.500h7v4M.5 4.500h7v4h-7z" fill="none" stroke="#9a9ea6" /></svg></button>
        <button class="mdi" aria-label="Закрыть окно"><svg width="10" height="10"><path d="M1 1l7 8M8 1L1 9" stroke="#b4b8c0" stroke-width="2" /></svg></button>
      </div>
    </nav>

    <div class="ribbonwrap">
      <div class="ribbon">
        <section v-for="g in groups" :key="g.title" class="group" :style="{ width: g.w + 'px' }">
          <div class="items">
            <template v-for="(it, i) in g.items" :key="i">
              <i v-if="it.sep" class="vsep"></i>
              <div v-else-if="it.rows" class="col" :style="{ width: it.w + 'px' }">
                <div v-for="(r, k) in it.rows" :key="k" class="srow">
                  <template v-if="r">
                    <button class="sm" :class="{ on: r.on }" :aria-label="r.icon"><Ico :n="r.icon" :s="16" /></button>
                    <button v-if="r.arrow" class="sa" aria-label="Ещё"><i class="tri"></i></button>
                  </template>
                </div>
              </div>
              <button v-else class="big" :style="{ width: it.w + 'px' }">
                <Ico :n="it.icon!" :s="32" />
                <span><u v-if="it.key">{{ it.key }}</u>{{ it.text }}</span>
                <span v-if="it.text2">{{ it.text2 }}<i v-if="it.inline" class="tri in"></i></span>
                <i v-if="it.below" class="tri below"></i>
              </button>
            </template>
          </div>
          <h2>{{ g.title }}</h2>
        </section>
      </div>
    </div>

    <div class="work">
      <aside class="side left">
        <div class="strip">
          <i class="grip"></i>
          <template v-for="(t, i) in leftTools" :key="i">
            <i v-if="t === '-'" class="hsep"></i>
            <button v-else-if="t === '>'" class="fly" aria-label="Ещё"><i class="rtri"></i></button>
            <button v-else class="tool" :aria-label="t"><Ico :n="t" :s="16" /></button>
          </template>
        </div>
        <div class="tail"><i class="bar2"></i><i class="rtri w"></i></div>
      </aside>

      <main class="canvas">
        <div class="scale"><i v-for="c in scale" :key="c" :style="{ background: c }"></i></div>
        <div class="marks"><span v-for="m in marks" :key="m">{{ m }}</span></div>
        <div class="info">
          <p>Загружение 8 Ветер X</p>
          <p>Мозаика P вдоль оси&nbsp; Z(G)</p>
          <p>Единицы измерения - т</p>
        </div>
        <svg class="ring" viewBox="28 147 1625 987" role="img" aria-label="Схема нагрузок">
          <path :d="arrows" fill="none" stroke="#f00" shape-rendering="crispEdges" />
          <path :d="nodes" fill="#f00" shape-rendering="crispEdges" />
        </svg>
      </main>

      <aside class="side rightbar">
        <template v-for="(bar, b) in rightTools" :key="b">
          <div class="strip">
            <i class="grip"></i>
            <template v-for="(t, i) in bar" :key="i">
              <button v-if="t === '>'" class="fly" aria-label="Ещё"><i class="rtri"></i></button>
              <button v-else class="tool" :class="{ on: t[0] === '*' }" :aria-label="t"><Ico :n="t.replace('*', '')" :s="16" /></button>
            </template>
          </div>
          <div class="tail"><i class="bar2"></i><i class="rtri w"></i></div>
        </template>
      </aside>
    </div>

    <footer class="status">
      <div class="panel">
        <button aria-label="Редактор загружений"><Ico n="editNo" :s="18" /></button>
        <button class="nav" aria-label="Следующее"><Ico n="up" :s="12" /></button>
        <button class="nav" aria-label="Предыдущее"><Ico n="down" :s="12" /></button>
        <select aria-label="Загружение"><option>8.</option></select>
        <i class="ssep"></i>
        <button aria-label="Вариант"><Ico n="hammer" :s="18" /></button>
        <select aria-label="Вариант конструирования"><option>1.</option></select>
        <span class="cell">Уз.: 273 / 274</span>
        <span class="cell">Эл.: 0 / 272</span>
        <span class="cell last">Загр.: 8 / 12</span>
        <svg width="12" height="12"><path d="M10 2v2M6 6v2M10 6v2M2 10v2M6 10v2M10 10v2" stroke="#fff" stroke-width="2" /><path d="M9 1v2M5 5v2M9 5v2M1 9v2M5 9v2M9 9v2" stroke="#333" stroke-width="2" /></svg>
      </div>
    </footer>

    <!-- load mosaic window -->
    <form class="dlg mosaic" @submit.prevent>
      <div class="bar-title"><span>Мозаика нагрузок</span><button type="button" aria-label="Закрыть"><svg width="12" height="12"><path d="M1 1l10 10M11 1L1 11" stroke="#888" /></svg></button></div>
      <fieldset class="m-type">
        <legend>Тип</legend>
        <div class="r18"><label class="w80"><input v-model="loadKind" type="radio" value="force">сила</label><label><input v-model="loadKind" type="radio" value="moment">момент</label></div>
        <div class="r18"><label><input v-model="loadKind" type="radio" value="bi">бимомент</label></div>
      </fieldset>
      <div class="m-pair">
        <fieldset class="m-dir">
          <legend>Направ.</legend>
          <label v-for="d in ['X', 'Y', 'Z']" :key="d"><input v-model="direction" type="radio" :value="d">{{ d }}</label>
        </fieldset>
        <fieldset class="m-sys">
          <legend>Сист.координат</legend>
          <label><input v-model="system" type="radio" value="global">Глобальная</label>
          <label><input v-model="system" type="radio" value="local">Местная</label>
        </fieldset>
      </div>
      <fieldset class="m-spread">
        <label><input v-model="spread" type="radio" value="point">Сосредоточенные</label>
        <fieldset>
          <legend>Распределенные по:</legend>
          <label><input v-model="spread" type="radio" value="len">длине</label>
          <label><input v-model="spread" type="radio" value="area">площади</label>
          <label><input v-model="spread" type="radio" value="vol">объему</label>
        </fieldset>
      </fieldset>
      <fieldset class="m-temp">
        <legend>Температурные</legend>
        <label class="w30"><input v-model="spread" type="radio" value="A">A</label>
        <label><input v-model="spread" type="radio" value="T">Tср.</label>
        <label><input v-model="spread" type="radio" value="dT">dT</label>
      </fieldset>
      <fieldset class="m-temp m-ecc">
        <legend>Эксцентриситеты</legend>
        <label><input v-model="spread" type="radio" value="dY1">dY1</label>
        <label><input v-model="spread" type="radio" value="dZ1">dZ1</label>
      </fieldset>
      <div class="m-btns"><button class="ib" aria-label="Применить"><Ico n="check" :s="16" /></button><button class="ib" type="button" aria-label="Справка"><Ico n="quest" :s="16" /></button></div>
    </form>

    <!-- load summation window -->
    <form class="dlg sum" @submit.prevent>
      <div class="bar-title"><span>Суммирование нагрузок</span><button type="button" aria-label="Закрыть"><svg width="12" height="12"><path d="M1 1l10 10M11 1L1 11" stroke="#888" /></svg></button></div>
      <div class="s-top">
        <div class="s-left">
          <div class="s-src">
            <label class="w83"><input v-model="source" type="radio" value="loads">Нагрузки</label>
            <label class="off w126"><input type="radio" name="src" disabled>Инерционные силы</label>
            <label class="off"><input type="radio" name="src" disabled>Нагрузка на фрагмент</label>
          </div>
          <div class="s-lists">
            <fieldset class="nodes">
              <legend>Список узлов</legend>
              <div class="list"><textarea v-model="nodeList" aria-label="Список узлов"></textarea><div class="sb"><svg width="8" height="6"><path d="M1 5l3-3 3 3" /></svg><svg width="8" height="6"><path d="M1 1l3 3 3-3" /></svg></div></div>
            </fieldset>
            <fieldset class="elems">
              <legend>Список элементов</legend>
              <div class="list"><textarea aria-label="Список элементов"></textarea><div class="sb"><svg width="8" height="6"><path d="M1 5l3-3 3 3" /></svg><svg width="8" height="6"><path d="M1 1l3 3 3-3" /></svg></div></div>
            </fieldset>
          </div>
        </div>
        <div class="s-btns"><button class="ib" aria-label="Применить"><Ico n="check" :s="16" /></button><button class="ib" type="button" aria-label="Справка"><Ico n="quest" :s="16" /></button></div>
      </div>
      <div class="s-mid">
        <fieldset class="s-case">
          <legend>Выбор загружения</legend>
          <div class="box">
            <div class="caserow">
              <label class="grow"><input v-model="pick" type="radio" value="case">Загружение</label>
              <label for="caseno" class="no">№</label>
              <input id="caseno" v-model="caseNo" type="text">
              <div class="spin"><button type="button" aria-label="Больше"><i class="tri up"></i></button><button type="button" aria-label="Меньше"><i class="tri"></i></button></div>
            </div>
            <label class="off"><input type="radio" name="pick" disabled>РСН</label>
          </div>
        </fieldset>
        <fieldset class="s-unit"><legend>Единицы</legend><output>м,т</output></fieldset>
      </div>
      <fieldset class="s-total">
        <legend>Суммарные нагрузки</legend>
        <div class="grid">
          <table class="t-sum">
            <thead><tr><th class="c44"></th><th v-for="c in sumCols" :key="c">{{ c }}</th></tr></thead>
            <tbody>
              <tr v-for="(r, i) in sumRows" :key="r">
                <th>Σ {{ r }}</th>
                <td class="mid">{{ i < 3 ? '0' : '' }}</td>
                <td v-for="k in 4" :key="k">0</td>
              </tr>
            </tbody>
          </table>
        </div>
      </fieldset>
      <fieldset class="s-coord">
        <legend>Координаты центров сил</legend>
        <div class="grid">
          <table class="t-key">
            <tbody>
              <tr v-for="r in centres" :key="r">
                <template v-for="c in centres" :key="c"><th class="c39">C{{ r }}_{{ c }}</th><td class="c59"></td></template>
                <th class="c33">P{{ r }}</th>
              </tr>
            </tbody>
          </table>
        </div>
      </fieldset>
      <fieldset class="s-over">
        <legend>Опрокидываюший момент</legend>
        <div class="pair">
          <fieldset>
            <legend>Контрольная точка А</legend>
            <div class="grid">
              <table class="t-key"><tbody><tr v-for="r in ['X', 'Y', 'Z']" :key="r"><th class="c45">{{ r }}</th><td class="c83">0</td></tr></tbody></table>
            </div>
            <label class="chk"><input v-model="atCursor" type="checkbox">Указать курсором</label>
          </fieldset>
          <fieldset>
            <legend>Момент относительно А</legend>
            <div class="grid">
              <table class="t-key"><tbody><tr v-for="m in moments" :key="m[0]"><th class="c45">{{ m[0] }}</th><td class="c83">{{ m[1] }}</td></tr></tbody></table>
            </div>
            <button class="calc" type="button">Вычислить</button>
          </fieldset>
        </div>
      </fieldset>
    </form>
  </div>
</template>

<style>
body { margin: 0; background: #4f4f4f; }
.ico { display: block; flex: none; overflow: visible; }
</style>

<style scoped>
* { box-sizing: border-box; }
.app { position: relative; display: flex; flex-direction: column; min-height: 100vh; border: solid #00b294; border-width: 0 1px 1px; background: #515151; font: 11px/14px "Open Sans", "Noto Sans", sans-serif; color: #000; overflow: hidden; }
button { padding: 0; border: 0; background: none; font: inherit; color: inherit; display: flex; align-items: center; justify-content: center; }
.tri { flex: none; width: 0; height: 0; border: solid transparent; border-width: 3px 3px 0; border-top-color: #555; }
.tri.up { border-width: 0 3px 3px; border-bottom-color: #000; }
.rtri { width: 0; height: 0; border: solid transparent; border-width: 3px 0 3px 4px; border-left-color: #555; }
.rtri.w { border-left-color: #fff; }

.title { display: flex; height: 28px; background: #00b294; }
.quick { display: flex; align-items: center; flex: 0 0 518px; padding-left: 63px; }
.qb { width: 22px; height: 24px; }
.qb.narrow { width: 20px; }
.qa { width: 12px; height: 24px; }
.quick .tri { border-top-color: #d8e8e4; }
.custom { flex-direction: column; gap: 2px; width: 10px; height: 20px; margin-left: 13px; }
.bar { width: 6px; height: 1px; background: #d8e8e4; }
h1 { flex: 0 0 439px; margin: 0; font: bold 11px/30px "Open Sans", "Noto Sans", sans-serif; }
.context { width: 114px; text-align: center; line-height: 28px; background: linear-gradient(#12a98e, #4c8a7c); border-bottom: 2px solid #e8604c; height: 28px; }
.winbtns { display: flex; margin-left: auto; }
.winbtns button { width: 46px; height: 28px; }
.orb { position: absolute; left: 11px; top: 8px; }

.tabs { display: flex; height: 25px; background: #535353; color: #fff; padding-left: 63px; }
.tab { height: 24px; margin-top: 1px; padding-top: 2px; white-space: nowrap; }
.tab.active { width: 183px; margin-right: 5px; background: linear-gradient(#fdfdfe, #d6dae0); color: #000; border: solid #e4f2f4; border-width: 1px 1px 0; border-radius: 4px 4px 0 0; }
.tab.ctx { width: 114px; border: solid #6c7480; border-width: 0 1px; }
.right { display: flex; align-items: center; margin-left: auto; }
.chev { margin: 0 5px 0 8px; fill: none; stroke: #e0e0e0; }
.hlp { margin-right: -3px; }
.mdi { width: 19px; }

.ribbonwrap { padding: 0 2px 3px 2px; background: #474747; }
.ribbon { display: flex; gap: 3px; height: 89px; padding: 3px 2px; border-radius: 3px; background: linear-gradient(#c9cdd3, #b4bac4 20%, #b8bec6 22%, #e6ecec 90%, #f2f4f4); }
.group { flex: none; border: 1px solid #909499; border-radius: 3px; box-shadow: inset 1px 1px 0 #eef0f2; overflow: hidden; background: linear-gradient(#d4d8df, #c3c8d0 15px, #b3b9c3 16px, #e4ebea 68px); height: 85px; }
.items { display: flex; height: 68px; }
.group h2 { margin: 0; height: 16px; font: 11px/15px "Open Sans", "Noto Sans", sans-serif; text-align: center; color: #fff; background: linear-gradient(#a8aaaa, #8e9090); }
.big { flex: none; flex-direction: column; justify-content: flex-start; padding-top: 4px; white-space: nowrap; line-height: 13px; }
.big .ico { margin-bottom: 4px; }
.big span { display: flex; align-items: center; height: 13px; }
.in { margin-left: 3px; }
.below { margin-top: 4px; }
.col { flex: none; padding-top: 1px; }
.srow { display: flex; align-items: center; height: 22px; }
.sm { width: 18px; height: 20px; }
.sm.on { width: 24px; height: 21px; margin-left: -3px; border: 1px solid #b8843c; border-radius: 2px; background: linear-gradient(#fbd49a, #f8b04c 50%, #ffe9a0); }
.sa { width: 16px; height: 20px; }
.vsep { width: 2px; height: 55px; margin: 8px 3px 0; border-left: 1px solid #999fa6; border-right: 1px solid #f4f6f6; }

.work { display: flex; flex: 1; align-items: stretch; }
.side { width: 26px; padding-left: 1px; }
.rightbar { width: 25px; padding: 0; }
.strip { display: flex; flex-direction: column; align-items: center; background: linear-gradient(90deg, #d2d5da, #a9adb6 80%, #8b8f99); border-radius: 3px 3px 0 0; }
.grip { width: 16px; height: 2px; margin: 5px 0 4px; background: repeating-linear-gradient(90deg, #333 0 3px, transparent 3px 4px); }
.tool { width: 21px; height: 22px; }
.tool.on { border: 1px solid #b8843c; background: linear-gradient(#fbd49a, #f8b04c 50%, #ffe9a0); }
.fly { width: 20px; height: 13px; }
.hsep { width: 14px; height: 1px; margin: 3px 0 4px; background: #fff; }
.tail { display: flex; justify-content: flex-end; align-items: center; gap: 1px; height: 12px; padding-right: 4px; background: linear-gradient(90deg, #4c4e52, #b0b4bc); border-radius: 0 0 3px 3px; }
.bar2 { width: 1px; height: 6px; background: #fff; }
.canvas { position: relative; flex: 1; margin: 0 2px 1px 1px; background: #fff; border-top: 2px solid #8a8a8a; font: 14px/17px "Open Sans", "Noto Sans", sans-serif; color: #000; }
.scale { display: flex; height: 27px; margin: 3px 80px 0 84px; border: solid #000; border-width: 1px 0 1px 1px; }
.scale i { flex: 1; border-right: 1px solid #000; }
.marks { display: flex; margin: 1px 37px 0 41px; line-height: 18px; }
.marks span { flex: 1 1 0; width: 0; display: flex; justify-content: center; white-space: nowrap; }
.info { padding: 10px 0 0 4px; }
.info p { margin: 0; }
.ring { position: absolute; inset: 0; width: 100%; height: 100%; }

.status { display: flex; justify-content: flex-end; height: 24px; background: linear-gradient(#454a50, #26292d 40%, #1c1e20); border-top: 1px solid #333; }
.panel { display: flex; align-items: center; width: 589px; padding: 0 3px 0 6px; background: linear-gradient(#c4c6c8, #989a9c 45%, #84878a); }
.panel button { width: 22px; height: 22px; background: #d2d8da; }
.panel button.nav { width: 24px; }
.panel select { width: 57px; height: 22px; border: 1px solid #888; border-radius: 0; appearance: none; background: conic-gradient(from -45deg at 50% 100%, #555 90deg, transparent 0) no-repeat right 4px center / 6px 3px #e8e8e8; font: inherit; padding: 0 2px; color: #000; }
.ssep { width: 2px; height: 20px; margin: 0 2px; background: #444; }
.cell { width: 132px; margin-left: 3px; padding-left: 3px; border-left: 2px solid #4c4e50; line-height: 20px; white-space: nowrap; }
.cell.last { width: 90px; }

.dlg { position: absolute; border: 1px solid #9f9f9f; background: #f0f0f0; box-shadow: 0 4px 12px rgba(0, 0, 0, .4); color: #000; }
.bar-title { display: flex; justify-content: space-between; align-items: center; height: 30px; padding: 0 9px 0 8px; background: #fff; color: #999; font: 12px/14px "Open Sans", "Noto Sans", sans-serif; }
fieldset { min-width: 0; margin: 0; padding: 0; border: 1px solid #dcdcdc; }
legend { height: 13px; padding: 0 3px; line-height: 13px; white-space: nowrap; background: #f0f0f0; }
label { display: flex; align-items: center; white-space: nowrap; }
input[type="radio"] { appearance: none; flex: none; width: 13px; height: 13px; margin: 0 3px 0 0; border: 1px solid #333; border-radius: 50%; background: #fff; }
input[type="radio"]:checked { background: radial-gradient(circle, #222 0 3px, #fff 4px); }
.off { color: #777; }
.off input[type="radio"] { border-color: #c4c4c4; }
.ib { width: 31px; height: 21px; border: 1px solid #adadad; background: #e1e1e1; }

.mosaic { left: 38px; top: 692px; width: 211px; height: 433px; font: 11px/13px "Liberation Sans", Arial, sans-serif; }
.m-type { height: 58px; margin: 0 6px 0 11px; padding: 0 14px; }
.m-type legend { margin: 0 auto; }
.r18 { display: flex; height: 18px; margin-bottom: 3px; }
.w80 { width: 80px; }
.w30 { width: 30px; }
.m-pair { display: flex; gap: 4px; margin: 4px 6px 0 9px; }
.m-pair fieldset { height: 79px; }
.m-pair legend { margin-left: -5px; }
.m-dir { width: 79px; padding: 3px 0 0 11px; }
.m-dir label { height: 19px; }
.m-sys { flex: 1; padding-left: 11px; }
.m-sys label { height: 25px; }
.m-spread { width: 153px; height: 117px; margin: 5px 0 0 30px; }
.m-spread > label { height: 20px; margin: 4px 0 3px 28px; }
.m-spread fieldset { width: 130px; height: 75px; margin-left: 8px; padding-left: 19px; }
.m-spread legend { margin-left: -13px; }
.m-spread fieldset label { height: 20px; }
.m-temp { position: relative; display: flex; gap: 15px; width: 153px; height: 49px; margin: -3px 0 0 30px; padding: 4px 0 0 8px; }
.m-temp label { height: 20px; }
.m-temp legend { margin-left: -2px; }
.m-ecc { margin-top: 6px; padding: 4px 0 0 32px; gap: 28px; }
.m-ecc legend { margin-left: -28px; }
.m-btns { display: flex; gap: 39px; margin: 11px 0 0 102px; }

.sum { left: 884px; top: 363px; width: 397px; height: 549px; font: 11px/13px "Open Sans", "Noto Sans", sans-serif; }
.s-top { display: flex; gap: 3px; padding: 6px 0 0 6px; }
.s-left { width: 351px; }
.s-src { display: flex; align-items: center; height: 23px; padding-left: 2px; border: 1px solid #dcdcdc; }
.w83 { width: 83px; }
.w126 { width: 126px; }
.s-lists { display: flex; gap: 3px; margin-top: 2px; }
.s-lists fieldset { height: 68px; padding: 3px 4px 0 5px; }
.s-lists .nodes { width: 171px; padding-right: 3px; }
.s-lists .elems { width: 174px; padding-right: 7px; }
.sum legend { margin-left: 4px; }
.s-lists legend { margin-left: -1px; }
.list { display: flex; height: 48px; border: 1px solid #777; }
textarea { flex: 1; min-width: 0; padding: 2px 8px; border: 0; outline: 0; resize: none; background: #f0f0f0; font: inherit; color: #000; overflow: hidden; }
.sb { display: flex; flex-direction: column; justify-content: space-between; align-items: center; width: 18px; padding: 7px 0; border-left: 1px solid #fff; }
.sb svg { fill: none; stroke: #b8b8b8; stroke-width: 2; }
.s-btns { display: flex; flex-direction: column; gap: 1px; padding-top: 1px; }
.s-mid { display: flex; gap: 3px; align-items: flex-start; padding-left: 6px; }
.s-case { width: 288px; height: 73px; }
.box { height: 57px; margin: 0 5px; padding: 1px 0 0 8px; border: 1px solid #dcdcdc; }
.caserow { display: flex; align-items: center; height: 24px; margin-bottom: 6px; }
.grow { width: 110px; }
.no { width: 61px; }
input[type="text"] { width: 39px; height: 23px; padding: 0 4px 2px; border: 1px solid #777; background: #fff; font: inherit; outline: 0; }
.spin { display: flex; flex-direction: column; gap: 1px; margin-left: 3px; }
.spin button { width: 15px; height: 10px; border: 1px solid #adadad; background: #f0f0f0; }
.spin .tri { border-top-color: #000; }
.s-unit { width: 93px; height: 33px; margin-top: 15px; padding: 0 12px 0 5px; }
.s-unit legend { margin-left: -1px; }
output { display: block; height: 15px; border: 1px solid; border-color: #777 #fff #fff #777; text-align: center; line-height: 17px; }
.s-total, .s-coord { width: 360px; height: 149px; margin-left: 18px; padding: 4px 0 0 2px; }
.s-coord { height: 75px; margin-top: 1px; padding-top: 5px; }
.grid { width: 354px; height: 126px; border: 1px solid #696969; background: #c0c0c0; overflow: hidden; }
.s-coord .grid { height: 54px; }
table { border-collapse: separate; border-spacing: 0; table-layout: fixed; width: 0; font: 13px/16px "Liberation Sans", Arial, sans-serif; }
th, td { width: 55px; height: 17px; padding: 0; border: solid #c0c0c0; border-width: 0 1px 1px 0; font-weight: normal; white-space: nowrap; overflow: hidden; }
td { background: #fff; text-align: right; padding-right: 2px; }
th { background: #c0c0c0; border-color: #000; text-align: center; }
td:last-child { border-right-color: #000; }
tr:last-child td { border-bottom-color: #000; }
td.mid { text-align: center; }
.t-sum thead th { font-size: 11px; height: 18px; box-shadow: inset 1px 1px 0 #fff; }
.t-sum tbody th { text-align: left; padding-left: 3px; font: 13px/16px "Liberation Serif", serif; }
.c44 { width: 45px; } .c39 { width: 39px; } .c59 { width: 59px; } .c33 { width: 34px; } .c45 { width: 45px; } .c83 { width: 83px; }
.s-coord td { border-right-color: #000; }
.s-over { width: 351px; height: 110px; margin: 4px 0 0 21px; }
.pair { display: flex; gap: 8px; margin-left: 17px; }
.pair fieldset { width: 153px; height: 95px; padding: 4px 0 0 5px; }
.pair legend { margin-left: -1px; }
.pair .grid { width: 143px; height: 56px; }
.chk { margin-top: 5px; }
input[type="checkbox"] { appearance: none; width: 13px; height: 13px; margin: 0 3px 0 0; border: 1px solid #333; background: #fff; }
.calc { width: 114px; height: 19px; margin: 2px 0 0 14px; border: 1px solid #adadad; background: #e1e1e1; }
</style>
